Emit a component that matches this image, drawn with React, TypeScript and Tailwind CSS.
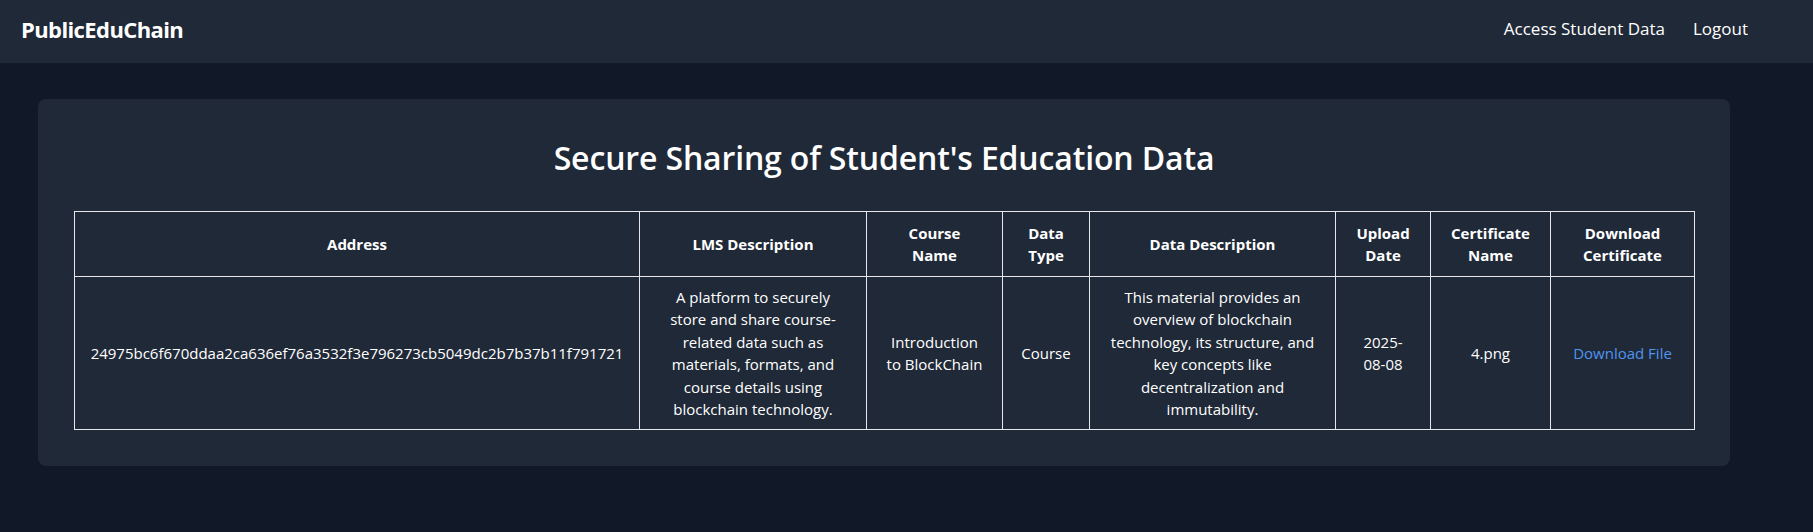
import React from "react";

const font = { fontFamily: '"Open Sans", "Noto Sans", sans-serif' };

const headers: string[][] = [
  ["Address"],
  ["LMS Description"],
  ["Course", "Name"],
  ["Data", "Type"],
  ["Data Description"],
  ["Upload", "Date"],
  ["Certificate", "Name"],
  ["Download", "Certificate"],
];

const cells: string[][] = [
  ["24975bc6f670ddaa2ca636ef76a3532f3e796273cb5049dc2b7b37b11f791721"],
  [
    "A platform to securely",
    "store and share course-",
    "related data such as",
    "materials, formats, and",
    "course details using",
    "blockchain technology.",
  ],
  ["Introduction", "to BlockChain"],
  ["Course"],
  [
    "This material provides an",
    "overview of blockchain",
    "technology, its structure, and",
    "key concepts like",
    "decentralization and",
    "immutability.",
  ],
  ["2025-", "08-08"],
  ["4.png"],
];

function Lines({ lines }: { lines: string[] }) {
  return (
    <>
      {lines.map((l, i) => (
        <span key={i} className="block whitespace-nowrap">
          {l}
        </span>
      ))}
    </>
  );
}

export default function App() {
  return (
    <div className="min-h-screen bg-[#111827] text-white" style={font}>
      <nav className="flex h-[63px] items-center justify-between bg-[#1f2937] pb-[6px] pl-[21px] pr-[65px]">
        <div className="text-[22px] font-bold leading-[32px] tracking-[-0.6px]">PublicEduChain</div>
        <div className="flex items-center gap-[28px] text-[17px] leading-[28px]">
          <a className="cursor-pointer">Access Student Data</a>
          <a className="cursor-pointer">Logout</a>
        </div>
      </nav>

      <main className="pt-[36px]">
        <div className="ml-[38px] w-[1692px] rounded-lg bg-[#1f2937] p-9">
          <h1 className="mb-[33px] h-[43px] pt-[3px] text-center text-[32px] font-semibold leading-[40px] tracking-[-0.15px]">
            Secure Sharing of Student's Education Data
          </h1>
          <table className="w-full table-fixed border-collapse text-center text-[15px] leading-[22.4px]">
            <colgroup>
              <col className="w-[565px]" />
              <col className="w-[227px]" />
              <col className="w-[136px]" />
              <col className="w-[87px]" />
              <col className="w-[246px]" />
              <col className="w-[95px]" />
              <col className="w-[120px]" />
              <col className="w-[144px]" />
            </colgroup>
            <thead>
              <tr>
                {headers.map((h, i) => (
                  <th
                    key={i}
                    className="border border-[#e5e7eb] px-1 py-[9.6px] align-middle font-bold"
                  >
                    <Lines lines={h} />
                  </th>
                ))}
              </tr>
            </thead>
            <tbody>
              <tr>
                {cells.map((c, i) => (
                  <td key={i} className="border border-[#e5e7eb] px-1 py-[9px] align-middle">
                    <Lines lines={c} />
                  </td>
                ))}
                <td className="border border-[#e5e7eb] px-1 py-[9px] align-middle">
                  <a className="cursor-pointer whitespace-nowrap text-[#4f94ef]">Download File</a>
                </td>
              </tr>
            </tbody>
          </table>
        </div>
      </main>
    </div>
  );
}
